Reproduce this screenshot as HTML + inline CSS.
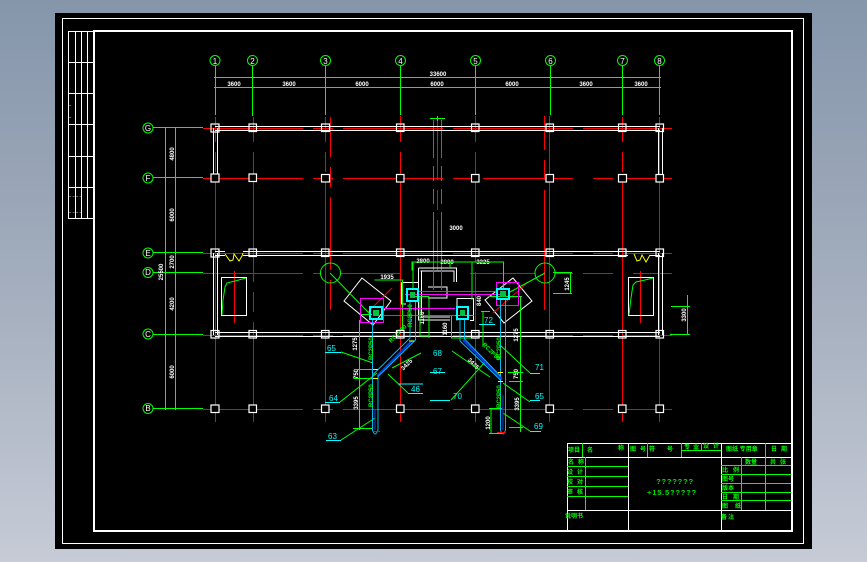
<!DOCTYPE html>
<html><head><meta charset="utf-8"><style>
html,body{margin:0;padding:0;width:867px;height:562px;overflow:hidden;background:linear-gradient(180deg,#8596ab 0%,#a3adbd 50%,#c6cbd6 100%)}
svg{position:absolute;left:0;top:0}
text{font-family:"Liberation Sans","Noto Sans CJK SC",sans-serif}
.w{fill:#fff;font-size:6px;font-weight:bold}
.b{fill:#fff;font-size:8px}
.c{fill:#00ffff;font-size:8px}
.g{fill:#00ff00;font-size:6px;font-weight:bold}
</style></head><body>
<svg width="867" height="562" viewBox="0 0 867 562" shape-rendering="crispEdges" fill="none">
<rect x="55" y="13" width="757" height="536" fill="#000"/>
<rect x="62.5" y="18.5" width="741" height="525" stroke="#fff"/>
<rect x="94" y="31" width="698" height="500" stroke="#fff" stroke-width="2"/>
<!-- left table -->
<g stroke="#fff">
<rect x="68.5" y="31.5" width="25" height="187"/>
<path d="M75.5 31V218M81.5 31V218M87.5 31V218M68 62.5H94M68 93.5H94M68 124.5H94M68 156.5H94M68 187.5H94"/>
</g>
<text class="w" style="font-size:4px" x="69" y="107">~</text>
<text class="w" style="font-size:4px" x="69" y="119">~</text>
<text class="w" style="font-size:4px" x="69" y="198">~ ~ ~ ~</text>
<text class="w" style="font-size:4px" x="69" y="214">~ ~ ~ ~</text>
<!-- red axes horizontal -->
<g stroke="#f00">
<path d="M203 128.5H303M313 128.5H333M343 128.5H443M453 128.5H573M583 128.5H672"/>
<path d="M203 178.5H303M313 178.5H333M343 178.5H443M453 178.5H473M483 178.5H573M593 178.5H613M623 178.5H672"/>
<path d="M203 253.5H303M313 253.5H333M343 253.5H443M453 253.5H573M593 253.5H613M623 253.5H672"/>
<path d="M203 273.5H303M313 273.5H320M340 273.5H400M470 273.5H535M555 273.5H573M583 273.5H613M633 273.5H672"/>
<path d="M203 335.5H303M313 335.5H333M343 335.5H443M453 335.5H573M583 335.5H613M623 335.5H672"/>
<path d="M203 409.5H303M313 409.5H333M343 409.5H443M453 409.5H573M583 409.5H613M623 409.5H672"/>
</g>
<!-- red axes vertical -->
<g stroke="#f00">
<path d="M215.5 117V142M215.5 152V172M215.5 182V422M253.5 117V142M253.5 152V282M253.5 292V312M253.5 322V422"/>
<path d="M325.5 117V142M325.5 152V172M325.5 182V422M330.5 117V157M330.5 167V187M330.5 197V270M330.5 280V310"/>
<path d="M400.5 116V142M400.5 152V422M475.5 116V142M475.5 152V262M475.5 272V422"/>
<path d="M549.5 116V422M544.5 116V150M544.5 160V180M544.5 190V310"/>
<path d="M622.5 117V142M622.5 152V172M622.5 182V422M659.5 117V422"/>
<path d="M437.5 118V180M437.5 190V210M437.5 220V270"/>
<path d="M234.5 271V323M640.5 271V323"/>
</g>
<!-- magenta dashes -->
<g stroke="#f0f">
<path d="M433.5 120V158M433.5 166V181M433.5 189V204M433.5 212V270M441.5 120V158M441.5 166V181M441.5 189V204M441.5 212V270"/>
</g>
<!-- walls -->
<g stroke="#fff">
<path d="M215 126.5H660M215 130.5H660M213.5 128V178M217.5 128V178M658.5 128V178M662.5 128V178"/>
<path d="M215 251.5H225M215 255.5H225M243 251.5H660M243 255.5H628M650 251.5H660M650 255.5H660"/>
<path d="M215 332.5H660M215 336.5H660M213.5 253V335M217.5 253V335M658.5 253V335M662.5 253V335"/>
<rect x="221.5" y="277.5" width="25" height="38"/>
<rect x="628.5" y="277.5" width="25" height="38"/>
</g>
<g stroke="#ff0" shape-rendering="auto">
<path d="M225 254L230 261L233 260L234 254L239 261L242 256L243 253"/>
<path d="M634 254L637 261L640 260L642 255L646 262L650 255"/>
</g>
<g stroke="#0f0" shape-rendering="auto">
<path d="M222 315L223 300L225 287L227 283L235 281L246 278"/>
<path d="M629 315L631 298L633 285L636 282L645 280L653 278"/>
</g>
<!-- dimension lines -->
<g stroke="#0f0">
<path d="M214 77.5H661M214 87.5H661"/>
<path d="M215.5 66V115M252.5 66V116M325.5 66V115M400.5 66V115M475.5 66V115M550.5 66V115M622.5 66V115M659.5 66V115"/>
<path d="M153 127.5H203M153 177.5H203M153 252.5H203M153 272.5H203M153 334.5H203M153 408.5H203"/>
<path d="M165.5 128V410M175.5 128V410"/>
<path d="M430 118.5H445M437.5 116V121"/>
</g>
<g stroke="#0f0" stroke-width="1" shape-rendering="auto">
<circle cx="215" cy="60.5" r="5"/><circle cx="252.5" cy="60.5" r="5"/><circle cx="325.5" cy="60.5" r="5"/><circle cx="400.5" cy="60.5" r="5"/><circle cx="475.5" cy="60.5" r="5"/><circle cx="550.5" cy="60.5" r="5"/><circle cx="622.5" cy="60.5" r="5"/><circle cx="659.5" cy="60.5" r="5"/>
<circle cx="148" cy="128" r="5"/><circle cx="148" cy="178" r="5"/><circle cx="148" cy="253" r="5"/><circle cx="148" cy="272.5" r="5"/><circle cx="148" cy="334" r="5"/><circle cx="148" cy="408.5" r="5"/>
<circle cx="330.5" cy="273" r="10"/><circle cx="545" cy="273" r="10"/>
</g>
<!-- labels -->
<g class="b" text-anchor="middle" style="font-size:9px">
<text class="b" x="215" y="64">1</text><text class="b" x="252.5" y="64">2</text><text class="b" x="325.5" y="64">3</text><text class="b" x="400.5" y="64">4</text><text class="b" x="475.5" y="64">5</text><text class="b" x="550.5" y="64">6</text><text class="b" x="622.5" y="64">7</text><text class="b" x="659.5" y="64">8</text>
<text class="b" x="148" y="131">G</text><text class="b" x="148" y="181">F</text><text class="b" x="148" y="256">E</text><text class="b" x="148" y="275">D</text><text class="b" x="148" y="337">C</text><text class="b" x="148" y="411">B</text>
</g>
<g class="w" text-anchor="middle">
<text class="w" x="234" y="86">3600</text><text class="w" x="289" y="86">3600</text><text class="w" x="362" y="86">6000</text><text class="w" x="437" y="86">6000</text><text class="w" x="512" y="86">6000</text><text class="w" x="586" y="86">3600</text><text class="w" x="641" y="86">3600</text>
<text class="w" x="438" y="76">33600</text>
<text class="w" x="456" y="230">3000</text>
<text class="w" x="387" y="279">1935</text><text class="w" x="447" y="264">2800</text><text class="w" x="483" y="264">3225</text><text class="w" x="423" y="263">2800</text>
<text class="w" transform="translate(174,154) rotate(-90)">4800</text>
<text class="w" transform="translate(174,215) rotate(-90)">6000</text>
<text class="w" transform="translate(174,262) rotate(-90)">2700</text>
<text class="w" transform="translate(174,304) rotate(-90)">4200</text>
<text class="w" transform="translate(174,372) rotate(-90)">6000</text>
<text class="w" transform="translate(163,272) rotate(-90)">25500</text>
<text class="w" transform="translate(686,315) rotate(-90)">3300</text>
<text class="w" transform="translate(569,284) rotate(-90)">1245</text>
<text class="w" transform="translate(357,344) rotate(-90)">1275</text>
<text class="w" transform="translate(358,374) rotate(-90)">750</text>
<text class="w" transform="translate(358,403) rotate(-90)">3395</text>
<text class="w" transform="translate(518,374) rotate(-90)">750</text>
<text class="w" transform="translate(519,404) rotate(-90)">3395</text>
<text class="w" transform="translate(490,423) rotate(-90)">1200</text>
<text class="w" transform="translate(424,318) rotate(-90)">1160</text>
<text class="w" transform="translate(481,301) rotate(-90)">840</text>
<text class="w" transform="translate(447,329) rotate(-90)">1160</text>
<text class="w" transform="translate(518,335) rotate(-90)">1275</text>
<text class="w" transform="translate(408,366) rotate(-45)">3425</text>
<text class="w" transform="translate(472,365) rotate(45)">3425</text>
</g>
<!-- central white -->
<g stroke="#fff">
<path d="M418.5 268H456.5V282M420.5 271H454V282M418.5 268V320H450M421.5 271V317H450"/>
<path d="M428 287H447V298H428"/>
<path d="M401.5 282.5H418M401.5 282.5V304H406"/>
<path d="M457.5 298.5H473.5V320.5H470M457 320.5V298"/>
</g>
<g stroke="#fff" shape-rendering="auto">
<path d="M362 278L391 301L373 325L344 301Z"/>
<path d="M513 278L532 301L504 323L485 300Z"/>
</g>
<!-- red diagonal -->
<g stroke="#f00" shape-rendering="auto">
<path d="M368 312L392 288M493 313L527 283L545 273"/>
</g>
<!-- green leaders -->
<g stroke="#0f0">
<path d="M374.5 280H402.5V330M412 270.5V262H472V300M472 262H503.5V290M450 268V262M413 262V290"/>
<path d="M414 296.5H429M420 296.5V336H429M429 296.5V338"/>
<path d="M360 314.5H372M359.5 320V430"/>
<path d="M449 315.5H474M451.5 315V338H474"/>
<path d="M489 296.5H522M520.5 296V432"/>
<path d="M481 311.5H490M483 311V347"/>
<path d="M354 369.5H372M354 378.5H372M353 428.5H372"/>
<path d="M508 372.5H523M509 381.5H523M509 427.5H523"/>
<path d="M489 408.5H502M491 408V433M489 433.5H502"/>
<path d="M553 272.5H572M570.5 272V293M553 293.5H572"/>
<path d="M671 306.5H690M687.5 295V335M670 334.5H690"/>
</g>
<g stroke="#0f0" shape-rendering="auto">
<path d="M341 352L373 363M340 402L377 373M341 440L375 418M388 374L408 393M392 368L421 353"/>
<path d="M330 273L369 313M545 273L510 292"/>
<path d="M500 345L530 373M503 383L530 402M503 413L530 431M451 400L485 362M452 351L490 377"/>
</g>
<!-- magenta structural -->
<g stroke="#f0f">
<rect x="360.5" y="298.5" width="23" height="24"/>
<rect x="496.5" y="282.5" width="22" height="23"/>
<path d="M382 308.5H455M382 315.5H455M405 294.5H500M418 291.5H497"/>
<path d="M433.5 270V290M441.5 270V290"/>
</g>
<!-- pipes -->
<g shape-rendering="auto">
<path d="M377 376L412.5 340" stroke="#0040e0" stroke-width="2"/>
<path d="M463 340L502 379" stroke="#0040e0" stroke-width="2"/>
<path d="M503 395V430M375 410V430" stroke="#0040e0"/>
<path d="M372.5 320V430Q375 438 378 430V376.5L415.5 340V300M410 300V338L372.5 375" stroke="#0cf" stroke-width=".9"/>
<path d="M500.5 379V430Q503 438 505.5 430V300M500.5 300V376L464.5 339V320M460 320V341L500.5 380" stroke="#0cf" stroke-width=".9"/>
</g>
<path d="M373 431.5H380M497 432.5H506" stroke="#f00"/>
<path d="M373 369.5H378M373 378.5H378M409 341H414M498 372.5H503M498 381.5H503" stroke="#ff0"/>
<!-- cyan boxes -->
<g stroke="#0ff" stroke-width="2">
<rect x="370" y="307" width="12" height="12"/>
<rect x="407" y="289" width="11" height="12"/>
<rect x="457" y="307" width="11" height="12"/>
<rect x="497" y="289" width="12" height="10"/>
</g>
<g fill="#00c040"><rect x="373" y="310" width="6" height="6"/><rect x="410" y="292" width="5" height="6"/><rect x="460" y="310" width="5" height="6"/><rect x="500" y="291" width="6" height="6"/></g>
<!-- pipe green text -->
<g class="g">
<text class="g" transform="translate(373,360) rotate(-90)">RC2P50</text>
<text class="g" transform="translate(373,407) rotate(-90)">RC2P50</text>
<text class="g" transform="translate(391,343) rotate(-45)">RC2P50</text>
<text class="g" transform="translate(482,345) rotate(45)">RC2P50</text>
<text class="g" transform="translate(501,360) rotate(-90)">RC2P50</text>
<text class="g" transform="translate(501,408) rotate(-90)">RC2P50</text>
<text class="g" transform="translate(412,327) rotate(-90)">RC2P50</text>
</g>
<!-- cyan callouts -->
<g stroke="#0ff">
<path d="M325 352.5H341M325 402.5H340M326 440.5H341M408 393.5H423M398 384H423M450 400.5H430M430 372.5H445M530 373.5H540M530 400.5H540M530 431.5H541M479 324.5H495"/>
</g>
<text class="c" x="327" y="351">65</text><text class="c" x="329" y="401">64</text><text class="c" x="328" y="439">63</text>
<text class="c" x="411" y="392">46</text><text class="c" x="433" y="374">67</text><text class="c" x="433" y="356">68</text>
<text class="c" x="453" y="399">70</text><text class="c" x="535" y="370">71</text><text class="c" x="535" y="399">65</text><text class="c" x="534" y="429">69</text><text class="c" x="484" y="323">72</text>
<!-- column squares -->
<g stroke="#fff" stroke-width="1.2" shape-rendering="geometricPrecision">
<g fill="none">
<rect x="211" y="124" width="8" height="8"/><rect x="249" y="124" width="7.5" height="7.5"/><rect x="321.5" y="124" width="8" height="7.5"/><rect x="396.5" y="124" width="7.5" height="7.5"/><rect x="471.5" y="124" width="7.5" height="7.5"/><rect x="546" y="124" width="7.5" height="7.5"/><rect x="618.5" y="124" width="7.5" height="7.5"/><rect x="656" y="124" width="7.5" height="7.5"/>
<rect x="211" y="249" width="8" height="8"/><rect x="249" y="249" width="7.5" height="7.5"/><rect x="396.5" y="249" width="7.5" height="7.5"/><rect x="471.5" y="249" width="7.5" height="7.5"/><rect x="546" y="249" width="7.5" height="7.5"/><rect x="618.5" y="249" width="7.5" height="7.5"/><rect x="656" y="249" width="7.5" height="7.5"/><rect x="321.5" y="249" width="7.5" height="7.5"/>
<rect x="211" y="330.5" width="8" height="7.5"/><rect x="249" y="330.5" width="7.5" height="7.5"/><rect x="321.5" y="330.5" width="7.5" height="7.5"/><rect x="396.5" y="330.5" width="7.5" height="7.5"/><rect x="471.5" y="330.5" width="7.5" height="7.5"/><rect x="546" y="330.5" width="7.5" height="7.5"/><rect x="618.5" y="330.5" width="7.5" height="7.5"/><rect x="656" y="330.5" width="7.5" height="7.5"/>
</g>
<g fill="#000">
<rect x="211" y="174" width="8" height="8"/><rect x="249" y="174" width="7.5" height="7.5"/><rect x="321.5" y="174.5" width="8" height="7.5"/><rect x="396.5" y="174.5" width="7.5" height="7.5"/><rect x="471.5" y="174.5" width="7.5" height="7.5"/><rect x="546" y="174.5" width="7.5" height="7.5"/><rect x="618.5" y="174.5" width="8" height="7.5"/><rect x="656" y="174.5" width="7.5" height="7.5"/>
<rect x="211" y="405" width="8" height="7.5"/><rect x="249" y="405" width="7.5" height="7.5"/><rect x="321.5" y="405" width="7.5" height="7.5"/><rect x="396.5" y="405" width="7.5" height="7.5"/><rect x="471.5" y="405" width="7.5" height="7.5"/><rect x="546" y="405" width="7.5" height="7.5"/><rect x="618.5" y="405" width="7.5" height="7.5"/><rect x="656" y="405" width="7.5" height="7.5"/>
</g>
</g>
<!-- title block -->
<g stroke="#fff">
<path d="M567.5 443V531M628.5 443V531M721.5 443V531M567 443.5H791M567 457.5H791M567 510.5H791"/>
</g>
<g stroke="#0f0">
<path d="M582.5 443V457M647.5 443V457M681.5 443V457M701.5 443V450M681 450.5H721"/>
<path d="M585.5 457V510M741.5 457V510M765.5 443V510"/>
<path d="M567 466.5H628M567 476.5H628M567 486.5H628M567 496.5H628"/>
<path d="M721 465.5H791M721 474.5H791M721 483.5H791M721 492.5H791M721 500.5H791"/>
</g>
<g class="g" style="font-size:7px">
<text class="g" x="568" y="452">项目</text><text class="g" x="587" y="452">名</text><text class="g" x="618" y="450">称</text>
<text class="g" x="630" y="451">图</text><text class="g" x="640" y="451">号</text><text class="g" x="649" y="451">符</text><text class="g" x="667" y="451">号</text>
<text class="g" x="684" y="449">专</text><text class="g" x="693" y="449">业</text><text class="g" x="703" y="448">设</text><text class="g" x="713" y="448">计</text>
<text class="g" x="726" y="451">图纸 专用章</text><text class="g" x="771" y="451">日</text><text class="g" x="781" y="451">期</text>
<text class="g" x="568" y="464">名</text><text class="g" x="578" y="464">称</text>
<text class="g" x="567" y="474">设</text><text class="g" x="577" y="474">计</text>
<text class="g" x="567" y="484">校</text><text class="g" x="577" y="484">对</text>
<text class="g" x="567" y="494">审</text><text class="g" x="577" y="494">核</text>
<text class="g" x="565" y="518">说明书</text>
<text class="g" x="722" y="472">比</text><text class="g" x="733" y="472">例</text>
<text class="g" x="722" y="481">图号</text><text class="g" x="722" y="490">版本</text><text class="g" x="722" y="499">日</text><text class="g" x="733" y="499">期</text><text class="g" x="722" y="508">图</text><text class="g" x="735" y="508">纸</text>
<text class="g" x="745" y="464">数量</text><text class="g" x="770" y="464">共</text><text class="g" x="780" y="464">张</text>
<text class="g" x="721" y="519">备</text><text class="g" x="728" y="519">注</text>
</g>
<text x="675" y="484" text-anchor="middle" style="font-size:7.5px;letter-spacing:.8px;font-weight:bold" fill="#00e000">???????</text>
<text x="672" y="495" text-anchor="middle" style="font-size:7.5px;letter-spacing:.8px;font-weight:bold" fill="#00e000">+15.5?????</text>
</svg>
</body></html>
